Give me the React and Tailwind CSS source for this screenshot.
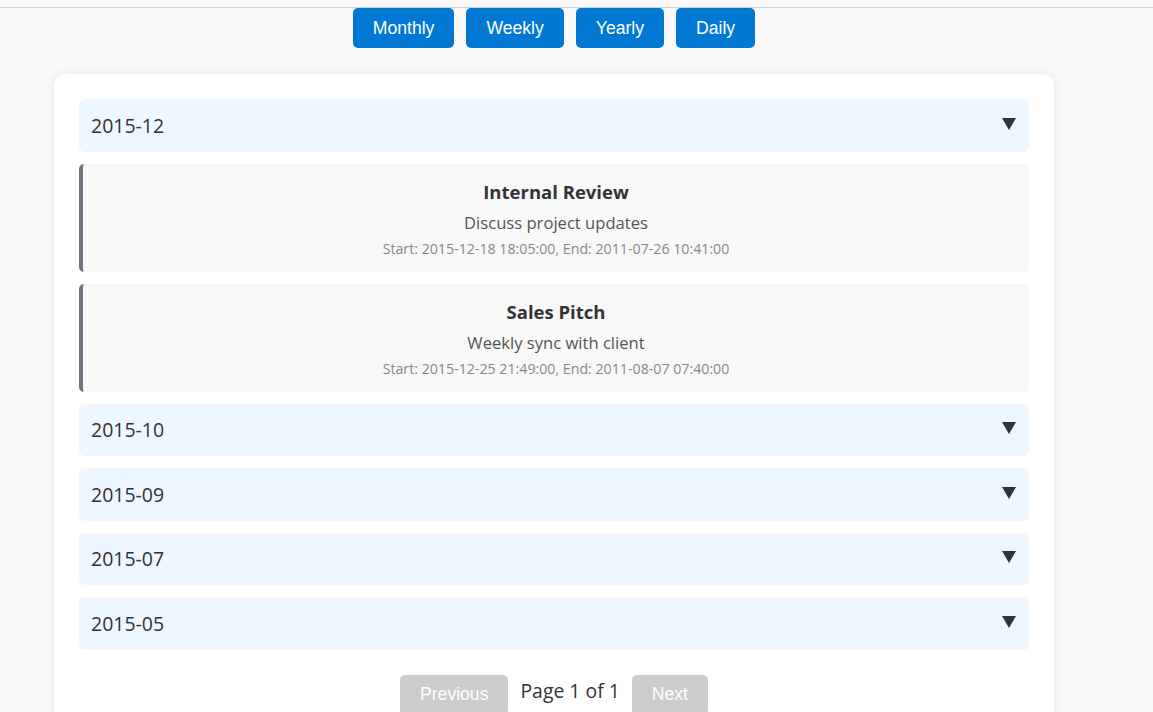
import React from "react";

const font = { fontFamily: '"Open Sans", "Noto Sans", sans-serif' };
const arial = { fontFamily: '"Liberation Sans", Arial, sans-serif' };

function Header({ label }) {
  return (
    <div className="flex h-[52.5px] items-center justify-between rounded-md bg-[#eef6fe] pl-3 pr-[13px]">
      <span className="text-[19.5px] text-[#333]">{label}</span>
      <svg width="14" height="12" viewBox="0 0 14 12" className="mt-[-3px]">
        <polygon points="0,0 14,0 7,12" fill="#333" />
      </svg>
    </div>
  );
}

function Event({ title, desc, time }) {
  return (
    <div className="flex h-[108px] flex-col items-center rounded-[5px] border-l-4 border-[#6c757d] bg-[#f8f8f8] pt-[15px]">
      <div className="text-[18.5px] font-bold leading-[26px] text-[#333]">{title}</div>
      <div className="mt-[6px] text-[16.6px] leading-[24px] text-[#555]">{desc}</div>
      <div className="mt-[4px] text-[14.2px] leading-[20px] text-[#888]">{time}</div>
    </div>
  );
}

export default function App() {
  return (
    <div className="min-h-[712px] bg-[#f9f9f9]" style={font}>
      <div className="h-[8px] border-b border-[#d4d4d4]" />
      <div className="ml-[54px] w-[1000px]">
        <div className="flex justify-center gap-3" style={arial}>
          {["Monthly", "Weekly", "Yearly", "Daily"].map((b) => (
            <button key={b} className="h-[40px] rounded-[5px] bg-[#0078d4] px-5 text-[17.6px] text-white">
              {b}
            </button>
          ))}
        </div>
        <div className="mt-[26px] rounded-xl bg-white p-[25px] pb-0 shadow-[0_0_10px_rgba(0,0,0,0.08)]">
          <div className="flex flex-col gap-3">
            <Header label="2015-12" />
            <Event title="Internal Review" desc="Discuss project updates" time="Start: 2015-12-18 18:05:00, End: 2011-07-26 10:41:00" />
            <Event title="Sales Pitch" desc="Weekly sync with client" time="Start: 2015-12-25 21:49:00, End: 2011-08-07 07:40:00" />
            <Header label="2015-10" />
            <Header label="2015-09" />
            <Header label="2015-07" />
            <Header label="2015-05" />
          </div>
          <div className="mt-[25px] flex items-start justify-center gap-3 pb-4">
            <button className="h-[40px] rounded-[5px] bg-[#cccccc] px-5 text-[17.6px] text-white" style={arial}>Previous</button>
            <span className="pt-[1px] text-[19.4px] text-[#333]">Page 1 of 1</span>
            <button className="h-[40px] rounded-[5px] bg-[#cccccc] px-5 text-[17.6px] text-white" style={arial}>Next</button>
          </div>
        </div>
      </div>
    </div>
  );
}
